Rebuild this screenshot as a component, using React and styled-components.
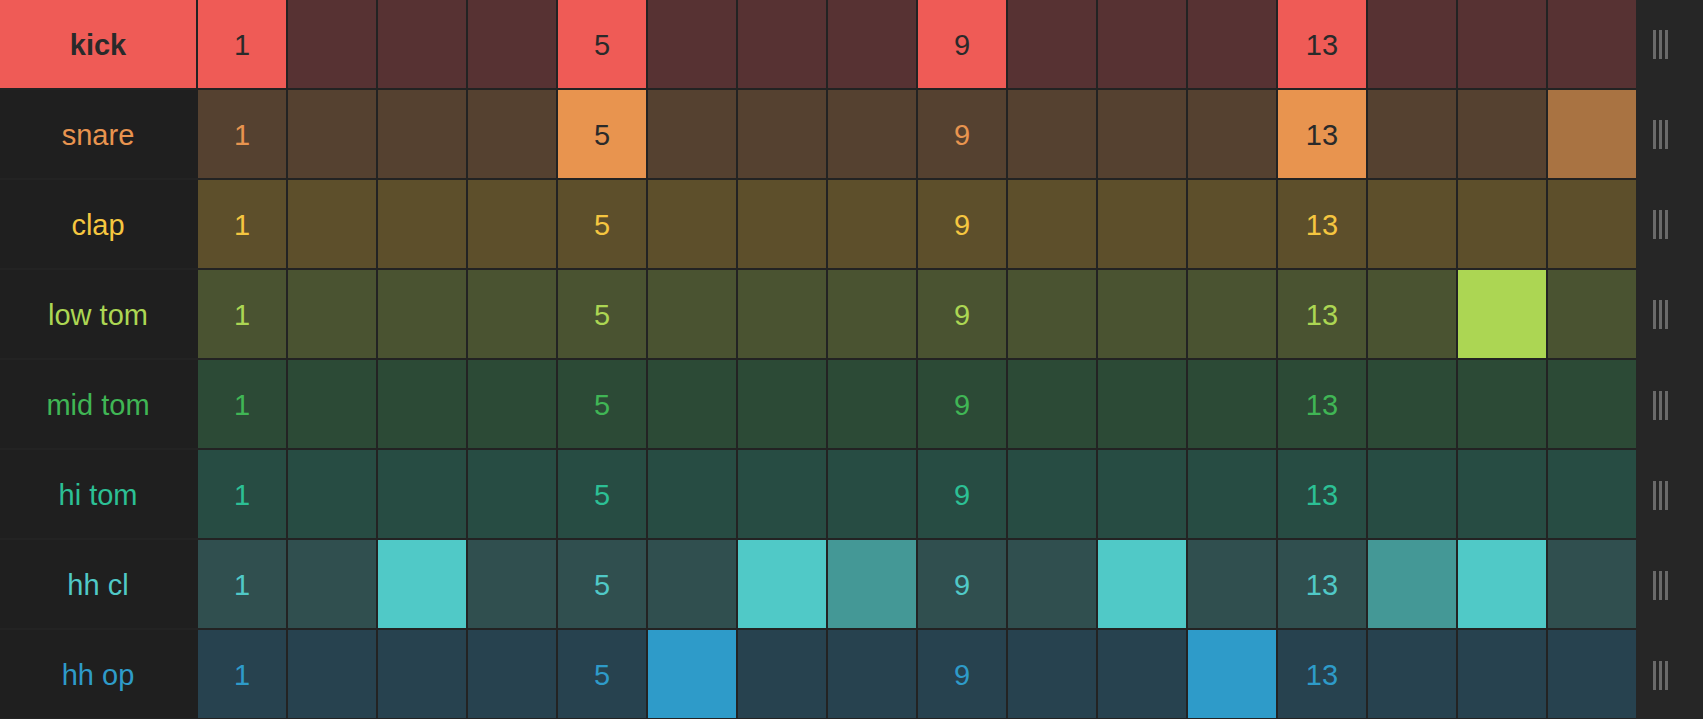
import styled, { createGlobalStyle } from "styled-components";

const GlobalStyle = createGlobalStyle`
  html, body {
    margin: 0;
    padding: 0;
    background: #232323;
  }
  body {
    font-family: "Liberation Sans", Arial, sans-serif;
    overflow: hidden;
  }
`;

// 0 = off, 1 = on, 2 = soft
const tracks = [
  {
    name: "kick",
    text: "#ef5b56",
    cell: "#573233",
    soft: "#a04845",
    steps: [1, 0, 0, 0, 1, 0, 0, 0, 1, 0, 0, 0, 1, 0, 0, 0],
  },
  {
    name: "snare",
    text: "#e8944f",
    cell: "#554130",
    soft: "#a97342",
    steps: [0, 0, 0, 0, 1, 0, 0, 0, 0, 0, 0, 0, 1, 0, 0, 2],
  },
  {
    name: "clap",
    text: "#f5c640",
    cell: "#5d4f2b",
    soft: "#a88f3a",
    steps: [0, 0, 0, 0, 0, 0, 0, 0, 0, 0, 0, 0, 0, 0, 0, 0],
  },
  {
    name: "low tom",
    text: "#acd653",
    cell: "#4a5331",
    soft: "#7b9642",
    steps: [0, 0, 0, 0, 0, 0, 0, 0, 0, 0, 0, 0, 0, 0, 1, 0],
  },
  {
    name: "mid tom",
    text: "#40b655",
    cell: "#2c4a36",
    soft: "#368445",
    steps: [0, 0, 0, 0, 0, 0, 0, 0, 0, 0, 0, 0, 0, 0, 0, 0],
  },
  {
    name: "hi tom",
    text: "#2cc095",
    cell: "#274c43",
    soft: "#2a866c",
    steps: [0, 0, 0, 0, 0, 0, 0, 0, 0, 0, 0, 0, 0, 0, 0, 0],
  },
  {
    name: "hh cl",
    text: "#50c9c7",
    cell: "#304f4f",
    soft: "#449896",
    steps: [0, 0, 1, 0, 0, 0, 1, 2, 0, 0, 1, 0, 0, 2, 1, 0],
  },
  {
    name: "hh op",
    text: "#2e9bc9",
    cell: "#27424f",
    soft: "#2b6f8c",
    steps: [0, 0, 0, 0, 0, 1, 0, 0, 0, 0, 0, 1, 0, 0, 0, 0],
  },
];

const selected = 0;

export default function App() {
  return (
    <>
      <GlobalStyle />
      <Sequencer>
        <Tracks>
          {tracks.map((t, i) => (
            <Row key={t.name}>
              <Label $color={t.text} $selected={i === selected}>
                {t.name}
              </Label>
              {t.steps.map((s, j) => {
                const bg = s === 1 ? t.text : s === 2 ? t.soft : t.cell;
                return (
                  <Step key={j} $bg={bg} $color={s === 1 ? "#2a2a2a" : t.text}>
                    {j % 4 === 0 ? j + 1 : ""}
                  </Step>
                );
              })}
            </Row>
          ))}
        </Tracks>
        <Handles>
          {tracks.map((t) => (
            <Handle key={t.name}>
              <Grip />
              <Grip />
              <Grip />
            </Handle>
          ))}
        </Handles>
      </Sequencer>
    </>
  );
}

// Styled Components

const Sequencer = styled.div`
  display: flex;
  width: 1703px;
  height: 719px;
  background: #232323;
`;

const Tracks = styled.div`
  display: flex;
  flex-direction: column;
  gap: 2px;
`;

const Row = styled.div`
  display: grid;
  grid-template-columns: 196px repeat(16, 88px);
  column-gap: 2px;
  height: 88px;
`;

const Label = styled.div`
  display: flex;
  align-items: center;
  justify-content: center;
  padding-top: 3px;
  font-size: 29px;
  font-weight: ${(p) => (p.$selected ? 700 : 400)};
  color: ${(p) => (p.$selected ? "#2a2a2a" : p.$color)};
  background: ${(p) => (p.$selected ? p.$color : "#1f1f1f")};
  box-shadow: ${(p) => (p.$selected ? "none" : "2px 0 0 #1f1f1f")};
`;

const Step = styled.div`
  display: flex;
  align-items: center;
  justify-content: center;
  padding-top: 3px;
  font-size: 29px;
  background: ${(p) => p.$bg};
  color: ${(p) => p.$color};
`;

const Handles = styled.div`
  width: 67px;
  background: #262626;
  display: flex;
  flex-direction: column;
  gap: 2px;
`;

const Handle = styled.div`
  height: 88px;
  display: flex;
  align-items: center;
  gap: 3px;
  padding-left: 17px;
  padding-top: 1px;
`;

const Grip = styled.span`
  width: 3px;
  height: 29px;
  background: #6a6a6a;
`;
